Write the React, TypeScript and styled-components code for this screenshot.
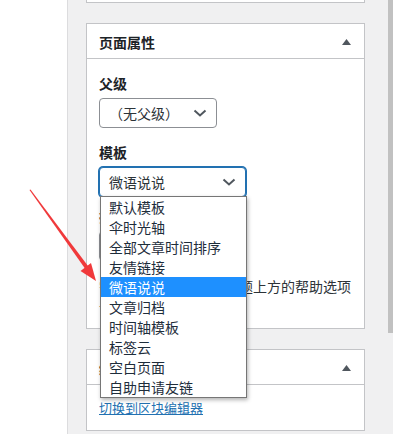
import styled, { createGlobalStyle } from 'styled-components';

const GlobalStyle = createGlobalStyle`
  html, body {
    margin: 0;
    padding: 0;
    background: #fff;
  }
  body {
    font-family: 'Noto Sans CJK SC', 'Noto Sans', sans-serif;
    color: #1d2327;
  }
`;

const Page = styled.div`
  position: relative;
  display: flex;
  width: 393px;
  height: 434px;
  overflow: hidden;
`;

const Gutter = styled.div`
  width: 67px;
  flex: none;
  background: #fff;
`;

const Column = styled.div`
  flex: 1;
  display: flex;
  flex-direction: column;
  gap: 20px;
  background: #f0f0f1;
  border-left: 1px solid #dcdcde;
  padding-left: 18px;
`;

const Scrollbar = styled.div`
  width: 5px;
  flex: none;
  background: #f0f0f1;
  display: flex;
  flex-direction: column;
`;

const Thumb = styled.div`
  height: 333px;
  background: #c1c1c1;
`;

const Panel = styled.div<{ $clip?: boolean }>`
  width: 277px;
  background: #fff;
  border: 1px solid #c3c4c7;
  border-top: ${(p) => (p.$clip ? 'none' : '1px solid #c3c4c7')};
  height: ${(p) => (p.$clip ? '2px' : 'auto')};
`;

const PanelHead = styled.div`
  height: 35px;
  display: flex;
  align-items: center;
  justify-content: space-between;
  padding: 1px 13px 0 12px;
  box-sizing: border-box;
  border-bottom: 1px solid #c3c4c7;
`;

const PanelTitle = styled.h2`
  margin: 0;
  font-size: 14px;
  font-weight: 700;
  line-height: 20px;
  color: #1d2327;
`;

const PanelBody = styled.div<{ $pad: number }>`
  padding: ${(p) => p.$pad}px 12px 12px;
  display: flex;
  flex-direction: column;
  align-items: flex-start;
`;

const Label = styled.div<{ $top: number }>`
  margin-top: ${(p) => p.$top}px;
  margin-bottom: 5px;
  font-size: 14px;
  line-height: 20px;
  font-weight: 700;
  color: #1d2327;
`;

const Select = styled.div<{ $w: number; $focus?: boolean }>`
  position: relative;
  box-sizing: border-box;
  width: ${(p) => p.$w}px;
  height: 30px;
  display: flex;
  align-items: center;
  justify-content: space-between;
  padding: 0 9px 0 ${(p) => (p.$focus ? 9 : 9)}px;
  border: 1px solid ${(p) => (p.$focus ? '#2271b1' : '#8c8f94')};
  box-shadow: ${(p) => (p.$focus ? '0 0 0 1px #2271b1' : 'none')};
  border-radius: 4px;
  font-size: 14px;
  line-height: 20px;
  color: #2c3338;
  background: #fff;
`;

const Input = styled.div`
  box-sizing: border-box;
  width: 60px;
  height: 30px;
  border: 1px solid #8c8f94;
  border-radius: 4px;
`;

const Help = styled.p`
  margin: 15px 0 0;
  font-size: 14px;
  line-height: 20px;
  color: #2c3338;
`;

const Link = styled.a`
  font-size: 13px;
  line-height: 20px;
  color: #2271b1;
  text-decoration: underline;
`;

const Menu = styled.ul`
  position: absolute;
  top: 28px;
  left: 0;
  width: 145px;
  margin: 0;
  padding: 0;
  list-style: none;
  background: #fff;
  border: 1px solid #767676;
  box-shadow: 1px 2px 4px rgba(0, 0, 0, 0.3);
  z-index: 5;
`;

const Option = styled.li<{ $active?: boolean }>`
  height: 20px;
  line-height: 20px;
  padding-left: 8px;
  font-size: 14px;
  white-space: nowrap;
  color: ${(p) => (p.$active ? '#fff' : '#1e2d3b')};
  background: ${(p) => (p.$active ? '#1e90ff' : 'transparent')};
`;

const Arrow = styled.svg`
  position: absolute;
  left: 0;
  top: 0;
  pointer-events: none;
  z-index: 10;
`;

const Chevron = () => (
  <svg width="14" height="8" viewBox="0 0 14 8">
    <polyline points="1.5,1.5 7,6.5 12.5,1.5" fill="none" stroke="#50575e" strokeWidth="2" />
  </svg>
);

const Toggle = () => (
  <svg width="9" height="6" viewBox="0 0 9 6">
    <polygon points="4.5,0 9,6 0,6" fill="#50575e" />
  </svg>
);

const templates = [
  '默认模板',
  '伞时光轴',
  '全部文章时间排序',
  '友情链接',
  '微语说说',
  '文章归档',
  '时间轴模板',
  '标签云',
  '空白页面',
  '自助申请友链',
];

export default function App() {
  return (
    <>
      <GlobalStyle />
      <Page>
        <Gutter />
        <Column>
          <Panel $clip />
          <Panel>
            <PanelHead>
              <PanelTitle>页面属性</PanelTitle>
              <Toggle />
            </PanelHead>
            <PanelBody $pad={0}>
              <Label $top={14}>父级</Label>
              <Select $w={118}>
                <span>（无父级）</span>
                <Chevron />
              </Select>
              <Label $top={14}>模板</Label>
              <Select $w={147} $focus>
                <span>微语说说</span>
                <Chevron />
                <Menu>
                  {templates.map((t) => (
                    <Option key={t} $active={t === '微语说说'}>
                      {t}
                    </Option>
                  ))}
                </Menu>
              </Select>
              <Label $top={9}>排序</Label>
              <Input />
              <Help>需要帮助？使用屏幕标题上方的帮助选项卡。</Help>
            </PanelBody>
          </Panel>
          <Panel>
            <PanelHead>
              <PanelTitle>编辑器</PanelTitle>
              <Toggle />
            </PanelHead>
            <PanelBody $pad={13}>
              <Link href="#">切换到区块编辑器</Link>
            </PanelBody>
          </Panel>
        </Column>
        <Scrollbar>
          <Thumb />
        </Scrollbar>
        <Arrow width="393" height="434" viewBox="0 0 393 434">
          <polygon points="29.5,190 30.5,189.5 88,266 85,268.5" fill="#f0393b" />
          <polygon points="96,281 80.5,271 91,263" fill="#f0393b" />
        </Arrow>
      </Page>
    </>
  );
}
